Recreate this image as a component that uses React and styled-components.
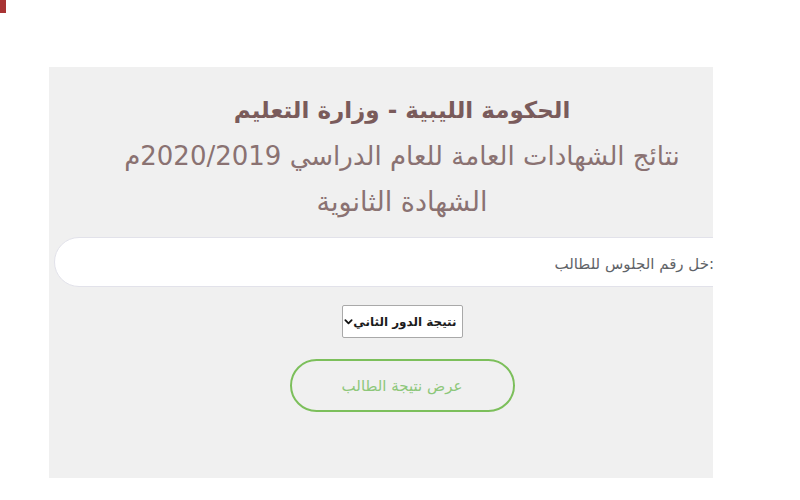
import React from "react";
import styled, { createGlobalStyle } from "styled-components";

const Global = createGlobalStyle`
  html, body { margin: 0; padding: 0; background: #ffffff; }
  body { font-family: "DejaVu Sans", "Noto Sans", sans-serif; }
`;

const Page = styled.div`
  width: 800px;
  height: 500px;
  display: flex;
  flex-direction: column;
  overflow: hidden;
`;

const TopBar = styled.div`
  height: 67px;
  display: flex;
  align-items: flex-start;
`;

const Mark = styled.div`
  width: 6px;
  height: 13px;
  background: #a83434;
`;

const Panel = styled.section`
  margin-left: 49px;
  width: 664px;
  height: 411px;
  background: #f0f0f0;
  overflow: hidden;
  display: flex;
`;

const Content = styled.div`
  flex: none;
  width: 706px;
  direction: rtl;
  display: flex;
  flex-direction: column;
  align-items: center;
  padding-top: 20px;
  box-sizing: border-box;
`;

const Titles = styled.div`
  display: flex;
  flex-direction: column;
  align-items: center;
`;

const TitleLine = styled.div`
  font-size: ${(p) => p.$size}px;
  font-weight: ${(p) => (p.$bold ? 700 : 400)};
  line-height: 46px;
  height: 46px;
  white-space: nowrap;
  color: ${(p) => (p.$bold ? "#7a5b5b" : "#8a7272")};
`;

const Input = styled.input`
  align-self: stretch;
  margin: 12px 0 0 5px;
  height: 50px;
  box-sizing: border-box;
  border: 1px solid #e2e2ea;
  border-radius: 25px;
  background: #ffffff;
  padding: 3px 40px 0 20px;
  font-family: inherit;
  font-size: 15px;
  direction: rtl;
  outline: none;
  &::placeholder { color: #5f6368; }
`;

const Select = styled.div`
  margin-top: 18px;
  width: 121px;
  height: 33px;
  box-sizing: border-box;
  border: 1px solid #a9a9a9;
  border-radius: 2px;
  background: #ffffff;
  display: flex;
  align-items: center;
  justify-content: space-between;
  padding: 0 5px 0 5px;
  font-size: 12px;
  font-weight: 700;
  color: #1c1c1c;
  white-space: nowrap;
`;

const Chevron = styled.svg`
  width: 9px;
  height: 9px;
  flex: none;
`;

const Button = styled.button`
  margin-top: 21px;
  width: 225px;
  height: 53px;
  box-sizing: border-box;
  border: 2px solid #7cbf5b;
  border-radius: 27px;
  background: transparent;
  color: #8dc77a;
  font-family: inherit;
  font-size: 15px;
  cursor: pointer;
`;

export default function App() {
  return (
    <Page>
      <Global />
      <TopBar>
        <Mark />
      </TopBar>
      <Panel>
        <Content>
          <Titles>
            <TitleLine $size={23} $bold>الحكومة الليبية - وزارة التعليم</TitleLine>
            <TitleLine $size={26}>نتائج الشهادات العامة للعام الدراسي 2020/2019م</TitleLine>
            <TitleLine $size={27}>الشهادة الثانوية</TitleLine>
          </Titles>
          <Input placeholder=":خل رقم الجلوس للطالب" />
          <Select>
            <span>نتيجة الدور الثاني</span>
            <Chevron viewBox="0 0 10 10">
              <path d="M1.5 3.5 L5 7 L8.5 3.5" fill="none" stroke="#111" strokeWidth="2" strokeLinecap="round" strokeLinejoin="round" />
            </Chevron>
          </Select>
          <Button>عرض نتيجة الطالب</Button>
        </Content>
      </Panel>
    </Page>
  );
}
